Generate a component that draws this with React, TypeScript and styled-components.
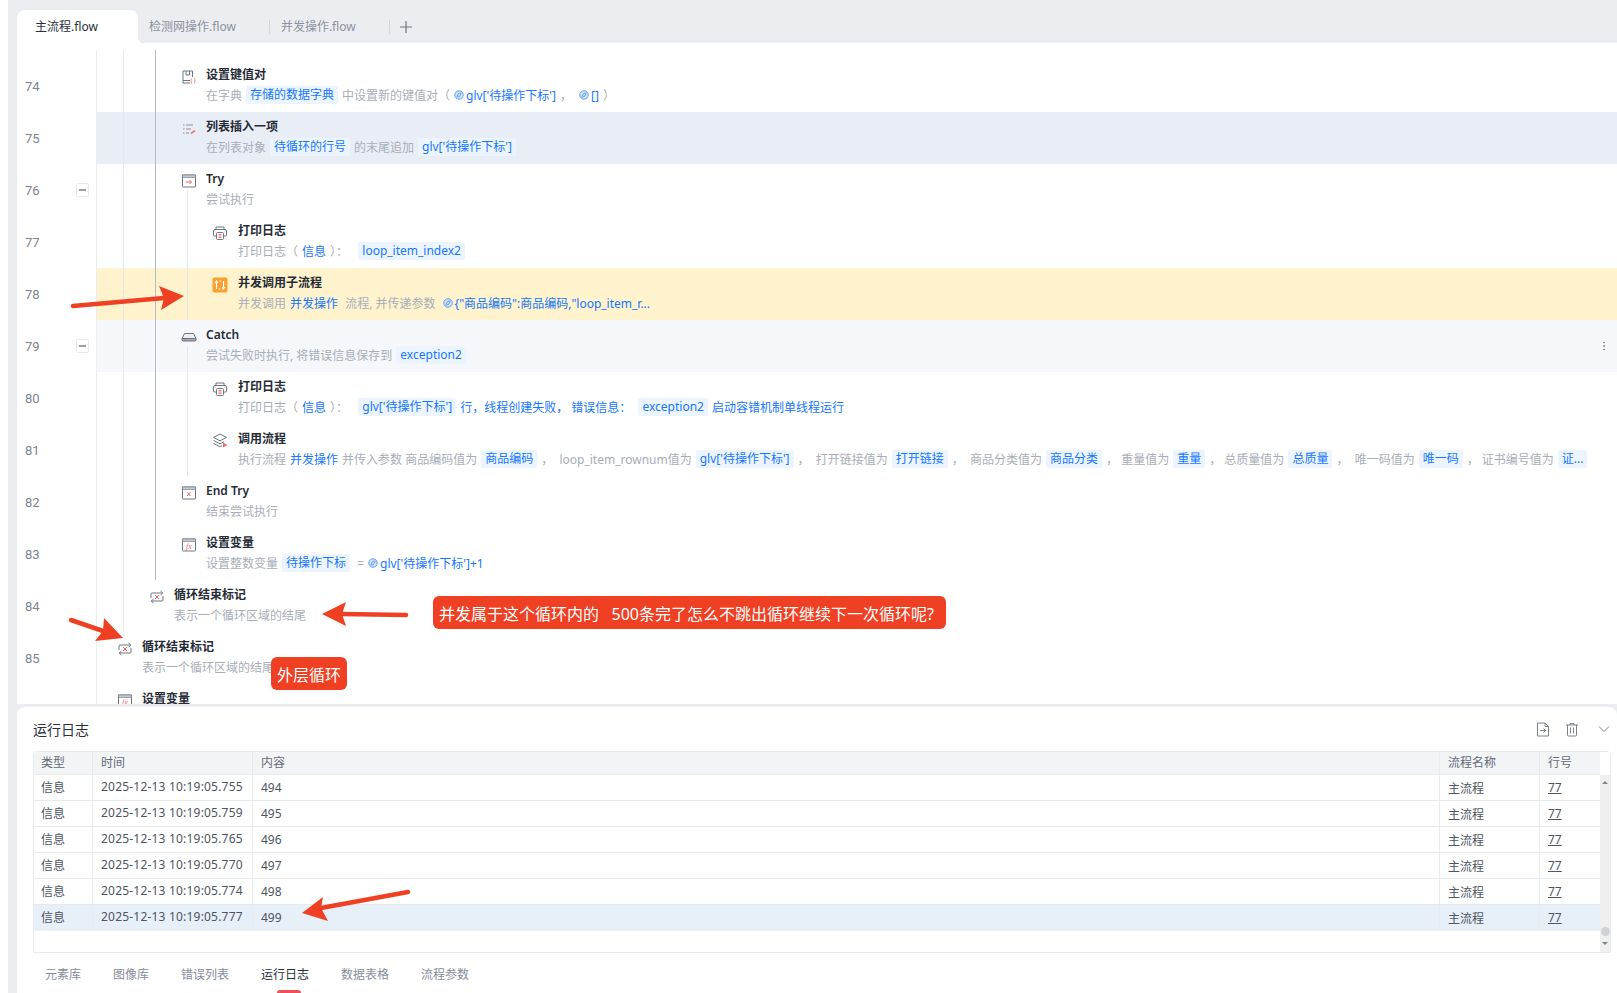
import React from "react";
import styled, { createGlobalStyle } from "styled-components";
import { MoreVertical } from "lucide-react";

const GlobalStyle = createGlobalStyle`
    html, body {
        margin: 0;
        padding: 0;
        overflow: hidden;
        background: #fff;
        font-family: "Noto Sans", "Noto Sans CJK SC", sans-serif;
    }
    * {
        box-sizing: border-box;
    }
`;

const Page = styled.div`
    position: relative;
    width: 1617px;
    height: 993px;
    overflow: hidden;
    display: flex;
    background: #fff;
`;

const Main = styled.div`
    margin-left: 8px;
    padding-left: 9px;
    flex: 1;
    min-width: 0;
    display: flex;
    flex-direction: column;
    background: #ebedf1;
`;

const TabBar = styled.div`
    height: 43px;
    padding-top: 10px;
    display: flex;
    align-items: stretch;
    flex: none;
`;

const FileTab = styled.div<{ $active?: boolean }>`
    position: relative;
    display: flex;
    align-items: center;
    font-size: 12px;
    padding-bottom: 2px;
    color: ${(p) => (p.$active ? "#2b303b" : "#8b919d")};
    background: ${(p) => (p.$active ? "#fff" : "transparent")};
    width: ${(p) => (p.$active ? "121px" : "auto")};
    padding-left: ${(p) => (p.$active ? "18px" : "11px")};
    padding-right: ${(p) => (p.$active ? "0" : "33px")};
    border-radius: ${(p) => (p.$active ? "8px 8px 0 0" : "0")};
    &::after {
        content: "";
        display: ${(p) => (p.$active ? "block" : "none")};
        position: absolute;
        right: -6px;
        bottom: 0;
        width: 6px;
        height: 6px;
        background: radial-gradient(circle at 100% 0, transparent 6px, #fff 6.5px);
    }
`;

const TabSep = styled.div`
    width: 1px;
    height: 14px;
    background: #d3d6dc;
    align-self: center;
`;

const PlusBtn = styled.div`
    align-self: center;
    margin: 0 0 0 10px;
    color: #6f7683;
    display: flex;
`;

const Editor = styled.div`
    height: 661px;
    flex: none;
    overflow: hidden;
    background: #fff;
    padding-top: 7px;
`;

const Row = styled.div<{ $stub?: boolean }>`
    display: flex;
    height: ${(p) => (p.$stub ? "10px" : "52px")};
`;

const Gutter = styled.div`
    width: 80px;
    flex: none;
    padding: 0 7px 0 8px;
    display: flex;
    align-items: center;
    justify-content: space-between;
    border-right: 1px solid #ebedf1;
    color: #7d8492;
    font-family: Roboto, sans-serif;
    font-size: 13px;
`;

const Collapse = styled.div`
    width: 13px;
    height: 14px;
    border: 1px solid #e8eaee;
    border-radius: 2px;
    display: flex;
    align-items: center;
    justify-content: center;
    &::before {
        content: "";
        width: 7px;
        height: 1.5px;
        background: #9aa0ab;
    }
`;

const Body = styled.div<{ $tone?: string }>`
    flex: 1;
    min-width: 0;
    display: flex;
    background: ${(p) =>
        p.$tone === "active" ? "#e9eef6" : p.$tone === "run" ? "#fef3cd" : p.$tone === "hover" ? "#f5f7fa" : "#fff"};
`;

const Guide = styled.div<{ $first?: boolean; $dark?: boolean }>`
    flex: none;
    width: ${(p) => (p.$first ? "27px" : "32px")};
    border-right: 1px solid ${(p) => (p.$dark ? "#b4bac6" : "#e4e7ec")};
`;

const IconSlot = styled.div<{ $flat?: boolean; $deep?: boolean }>`
    flex: none;
    width: ${(p) => (p.$deep ? "26px" : "25px")};
    margin-left: ${(p) => (p.$flat ? "20px" : p.$deep ? "24px" : "25px")};
    padding-top: 9px;
    display: flex;
    flex-direction: column;
    svg {
        display: block;
        flex: none;
    }
`;

const Tail = styled.div`
    flex: 1;
    width: 1px;
    margin: 1px 0 0 6px;
    background: #e4e7ec;
`;

const Content = styled.div`
    flex: 1;
    min-width: 0;
    padding-top: 5px;
`;

const Title = styled.div`
    height: 20px;
    line-height: 20px;
    font-size: 12px;
    font-weight: 600;
    color: #262b36;
`;

const Desc = styled.div`
    height: 20px;
    display: flex;
    align-items: center;
    gap: 4px;
    font-size: 12px;
    color: #a8aeb9;
    white-space: pre;
`;

const Blue = styled.span`
    color: #1677ff;
`;

const Tag = styled.span`
    height: 18px;
    line-height: 18px;
    padding: 0 4px;
    border-radius: 2px;
    background: #ecf5ff;
    color: #1677ff;
`;

const PyRef = styled.span`
    display: inline-flex;
    align-items: center;
    gap: 2px;
    color: #1677ff;
`;

const Kebab = styled.div`
    flex: none;
    width: 12px;
    margin-right: 7px;
    display: flex;
    align-items: center;
    color: #7d8492;
`;

const LogPanel = styled.div`
    margin-top: 3px;
    flex: 1;
    min-height: 0;
    display: flex;
    flex-direction: column;
    background: #fff;
    border-radius: 8px 8px 0 0;
    padding: 0 6px 0 16px;
`;

const LogHeader = styled.div`
    height: 44px;
    flex: none;
    display: flex;
    align-items: center;
    justify-content: space-between;
`;

const LogTitle = styled.div`
    font-size: 14px;
    color: #2b303b;
`;

const Tools = styled.div`
    display: flex;
    align-items: center;
    gap: 15px;
    padding-right: 1px;
    color: #7b8290;
    svg {
        display: block;
    }
    svg:last-child {
        margin-left: 4px;
    }
`;

const TableBox = styled.div`
    height: 202px;
    flex: none;
    display: flex;
    border: 1px solid #e8eaee;
    border-radius: 4px 4px 0 0;
`;

const TableMain = styled.div`
    flex: 1;
    min-width: 0;
`;

const LogRow = styled.div<{ $head?: boolean; $sel?: boolean }>`
    display: grid;
    grid-template-columns: 59px 160px 1187px 100px 61px;
    height: ${(p) => (p.$head ? "23px" : "26px")};
    font-size: 12px;
    color: ${(p) => (p.$head ? "#646b78" : "#4e5562")};
    background: ${(p) => (p.$head ? "#f3f4f6" : p.$sel ? "#e7eff9" : "#fff")};
    border-bottom: 1px solid ${(p) => (p.$sel ? "#e7eff9" : "#e8eaee")};
`;

const LogCell = styled.div<{ $raised?: boolean }>`
    display: flex;
    align-items: center;
    padding-left: 8px;
    padding-bottom: ${(p) => (p.$raised ? "2px" : "0")};
    border-right: 1px solid #e8eaee;
    white-space: pre;
    &:first-child {
        padding-left: 7px;
    }
    &:last-child {
        border-right: none;
    }
`;

const TimeText = styled.span`
    letter-spacing: 0.2px;
`;

const LineLink = styled.span`
    text-decoration: underline;
`;

const ScrollTrack = styled.div`
    width: 10px;
    flex: none;
    display: flex;
    flex-direction: column;
    align-items: center;
    padding-bottom: 7px;
    background: #efefef;
`;

const ScrollCorner = styled.div`
    height: 23px;
    width: 100%;
    background: #fff;
    flex: none;
`;

const ScrollArrow = styled.div<{ $down?: boolean }>`
    width: 0;
    height: 0;
    border-left: 3px solid transparent;
    border-right: 3px solid transparent;
    ${(p) => (p.$down ? "border-top: 3px solid #80848c;" : "border-bottom: 3px solid #80848c;")}
    margin-top: 6px;
`;

const ScrollThumb = styled.div`
    width: 9px;
    height: 9px;
    border-radius: 50%;
    background: #cfd2d6;
    margin-top: auto;
`;

const BottomTabs = styled.div`
    flex: 1;
    display: flex;
    align-items: center;
    gap: 32px;
    padding: 0 0 0 12px;
`;

const BottomTab = styled.div<{ $active?: boolean }>`
    position: relative;
    height: 40px;
    padding-top: 1px;
    display: flex;
    align-items: center;
    font-size: 12px;
    color: ${(p) => (p.$active ? "#2b303b" : "#868d9b")};
    &::after {
        content: "";
        display: ${(p) => (p.$active ? "block" : "none")};
        position: absolute;
        left: 16px;
        bottom: 0;
        width: 24px;
        height: 3px;
        border-radius: 4px 4px 0 0;
        background: #ef4f56;
    }
`;

const Bubble = styled.div<{ $left: number; $top: number }>`
    position: absolute;
    left: ${(p) => p.$left}px;
    top: ${(p) => p.$top}px;
    height: 33px;
    padding: 0 6px;
    display: flex;
    align-items: center;
    border-radius: 6px;
    background: #ef4023;
    color: #fff;
    font-size: 16px;
    white-space: pre;
`;

const WideBubble = styled(Bubble)`
    padding-right: 12px;
`;

const ArrowLayer = styled.svg`
    position: absolute;
    left: 0;
    top: 0;
    pointer-events: none;
`;

const GRAY = "#6f7683";
const RED = "#f47a7a";

const WindowBox = ({ children }: { children?: React.ReactNode }) => (
    <>
        <rect x="1.5" y="2" width="13" height="12" rx="0.5" fill="none" stroke={GRAY} />
        <rect x="1.5" y="2" width="13" height="2.4" fill="#c5c9d0" stroke={GRAY} strokeWidth="0.6" />
        {children}
    </>
);

const RowIcon = ({ kind }: { kind: string }) => {
    if (kind === "run") {
        return (
            <svg width="16" height="16" viewBox="0 0 16 16">
                <rect x="0.5" y="0.5" width="15" height="15" rx="2" fill="#fb9f2f" />
                <path
                    d="M4.5 12V4.5M3 6l1.5-2L6 6M11.5 4v7.5M10 10l1.5 2 1.5-2M7.5 4h2M6.5 12h2"
                    fill="none"
                    stroke="#fff"
                    strokeWidth="1.2"
                />
            </svg>
        );
    }
    return (
        <svg width="16" height="16" viewBox="0 0 16 16" fill="none">
            {kind === "kv" && (
                <>
                    <path d="M11.5 8V2H2v12h7M2 11.5h7M5 2v4h3.5V2" stroke={GRAY} />
                    <path
                        d="M11 9.5c-1 0-.6 2-1.2 2.5.6.5.2 2.5 1.2 2.5M13 9.5c1 0 .6 2 1.2 2.5-.6.5-.2 2.5-1.2 2.5"
                        stroke={RED}
                    />
                </>
            )}
            {kind === "list" && (
                <>
                    <path d="M2 4h1.5M5 4h7M2 8h1.5M5 8h5M2 12h1.5M5 12h3" stroke="#8b919d" />
                    <path d="M10 12.5l4-3" stroke={RED} strokeWidth="1.6" />
                </>
            )}
            {kind === "try" && (
                <WindowBox>
                    <path d="M4.5 9h5.5M8.5 7l2 2-2 2" stroke="#f4686c" />
                </WindowBox>
            )}
            {kind === "print" && (
                <>
                    <path
                        d="M4 4V2h8v2M4 11H2.5A1 1 0 0 1 1.5 10V6a1.5 1.5 0 0 1 1.5-1.5h10A1.5 1.5 0 0 1 14.5 6v4a1 1 0 0 1-1 1H12"
                        stroke={GRAY}
                    />
                    <rect x="4.5" y="7.5" width="7" height="7" rx="1" fill="#fff" stroke={GRAY} />
                    <path d="M6.5 9.5h3M6.5 11h3M6.5 12.5h3" stroke="#f4686c" strokeWidth="0.9" />
                </>
            )}
            {kind === "catch" && (
                <>
                    <path d="M3.5 4.5h9L15 9.5H1z" fill="#eceef2" stroke={GRAY} />
                    <path d="M1 9.5h14v1.5a1 1 0 0 1-1 1H2a1 1 0 0 1-1-1z" fill="#a4a9b3" stroke={GRAY} />
                    <circle cx="3.5" cy="10.8" r="0.8" fill="#f4686c" />
                </>
            )}
            {kind === "flow" && (
                <>
                    <path d="M8 1l6.5 3.4L8 7.8 1.5 4.4z" stroke={GRAY} />
                    <path d="M1.5 7.4L8 10.8l4-2.1M1.5 10.4L8 13.8l2-1" stroke={GRAY} />
                    <path d="M11 9.5l4.5 2.5-4.5 2.5z" fill="#f4686c" />
                </>
            )}
            {kind === "endtry" && (
                <WindowBox>
                    <path d="M6 7.2l3.5 3.8M9.5 7.2L6 11" stroke="#f4686c" />
                </WindowBox>
            )}
            {kind === "fx" && (
                <WindowBox>
                    <text
                        x="8"
                        y="11.8"
                        textAnchor="middle"
                        fontSize="8"
                        fontStyle="italic"
                        fontFamily="Liberation Serif, serif"
                        fill="#f4686c"
                    >
                        fx
                    </text>
                </WindowBox>
            )}
            {kind === "loop" && (
                <>
                    <path d="M2 9V5A1 1 0 0 1 3 4h10M14 7v4a1 1 0 0 1-1 1H3" stroke={GRAY} />
                    <path d="M11.5 2l2.4 2-2.4 2M4.5 10L2.1 12l2.4 2" stroke={GRAY} />
                    <path d="M6 6l4 4M10 6l-4 4" stroke="#f4545a" />
                </>
            )}
        </svg>
    );
};

const PyMark = () => (
    <svg width="10" height="10" viewBox="0 0 10 10" fill="none">
        <circle cx="5" cy="5" r="4.2" fill="#d6e6fb" stroke="#5f9fef" strokeWidth="1" />
        <path d="M2.6 6.2C4.2 6 3.6 3.4 5.2 3.2h2M7.4 3.8C5.8 4 6.4 6.6 4.8 6.8h-2" stroke="#4a90ee" strokeWidth="0.9" />
    </svg>
);

const FileArrowIcon = () => (
    <svg width="14" height="15" viewBox="0 0 14 15" fill="none" stroke="#7b8290" strokeWidth="1">
        <path d="M1.5 1h7.5l3.5 3.5V14h-11zM9 1v3.5h3.5" />
        <path d="M4 8.5h5.5M7.5 6.5l2 2-2 2" />
    </svg>
);

const TrashIcon = () => (
    <svg width="14" height="15" viewBox="0 0 14 15" fill="none" stroke="#7b8290" strokeWidth="1">
        <path d="M1 3h12M5 3V1.5h4V3M2.5 3v10a1 1 0 0 0 1 1h7a1 1 0 0 0 1-1V3M5.5 5.5v6M8.5 5.5v6" />
    </svg>
);

const ChevronIcon = () => (
    <svg width="12" height="8" viewBox="0 0 12 8" fill="none" stroke="#7b8290" strokeWidth="1">
        <path d="M1 1.5l5 5 5-5" />
    </svg>
);

const PlusIcon = () => (
    <svg width="12" height="12" viewBox="0 0 12 12" fill="none" stroke="currentColor" strokeWidth="1.2">
        <path d="M6 0v12M0 6h12" />
    </svg>
);

type Pt = [number, number];

const Arrow = ({ tail, tip, c1, c2, notch }: { tail: Pt; tip: Pt; c1: Pt; c2: Pt; notch: Pt }) => (
    <>
        <path
            d={`M${tail[0]} ${tail[1]}L${notch[0]} ${notch[1]}`}
            stroke="#ef4023"
            strokeWidth="4.5"
            strokeLinecap="round"
        />
        <polygon points={[tip, c1, notch, c2].map((p) => p.join(",")).join(" ")} fill="#ef4023" />
    </>
);

type Seg = { t?: string; b?: string; g?: string; p?: string };

type FlowLine = {
    no?: number;
    depth: number;
    icon: string;
    title: string;
    desc: Seg[];
    tone?: string;
    fold?: boolean;
    tail?: boolean;
    more?: boolean;
};

const lines: FlowLine[] = [
    {
        no: 74,
        depth: 2,
        icon: "kv",
        title: "设置键值对",
        desc: [
            { t: "在字典" },
            { g: "存储的数据字典" },
            { t: "中设置新的键值对（" },
            { p: "glv['待操作下标']" },
            { t: "， " },
            { p: "[]" },
            { t: "）" }
        ]
    },
    {
        no: 75,
        depth: 2,
        icon: "list",
        title: "列表插入一项",
        tone: "active",
        desc: [{ t: "在列表对象" }, { g: "待循环的行号" }, { t: "的末尾追加" }, { g: "glv['待操作下标']" }]
    },
    { no: 76, depth: 2, icon: "try", title: "Try", fold: true, tail: true, desc: [{ t: "尝试执行" }] },
    {
        no: 77,
        depth: 3,
        icon: "print",
        title: "打印日志",
        desc: [{ t: "打印日志（" }, { b: "信息" }, { t: "）：  " }, { g: "loop_item_index2" }]
    },
    {
        no: 78,
        depth: 3,
        icon: "run",
        title: "并发调用子流程",
        tone: "run",
        desc: [
            { t: "并发调用" },
            { b: "并发操作" },
            { t: " 流程, 并传递参数 " },
            { p: "{\"商品编码\":商品编码,\"loop_item_r..." }
        ]
    },
    {
        no: 79,
        depth: 2,
        icon: "catch",
        title: "Catch",
        tone: "hover",
        fold: true,
        tail: true,
        more: true,
        desc: [{ t: "尝试失败时执行, 将错误信息保存到" }, { g: "exception2" }]
    },
    {
        no: 80,
        depth: 3,
        icon: "print",
        title: "打印日志",
        desc: [
            { t: "打印日志（" },
            { b: "信息" },
            { t: "）：  " },
            { g: "glv['待操作下标']" },
            { b: "行，线程创建失败， 错误信息： " },
            { g: "exception2" },
            { b: "启动容错机制单线程运行" }
        ]
    },
    {
        no: 81,
        depth: 3,
        icon: "flow",
        title: "调用流程",
        desc: [
            { t: "执行流程" },
            { b: "并发操作" },
            { t: "并传入参数 商品编码值为" },
            { g: "商品编码" },
            { t: "，  loop_item_rownum值为" },
            { g: "glv['待操作下标']" },
            { t: "，  打开链接值为" },
            { g: "打开链接" },
            { t: "，  商品分类值为" },
            { g: "商品分类" },
            { t: "， 重量值为" },
            { g: "重量" },
            { t: "， 总质量值为" },
            { g: "总质量" },
            { t: "，  唯一码值为" },
            { g: "唯一码" },
            { t: "， 证书编号值为" },
            { g: "证..." }
        ]
    },
    { no: 82, depth: 2, icon: "endtry", title: "End Try", desc: [{ t: "结束尝试执行" }] },
    {
        no: 83,
        depth: 2,
        icon: "fx",
        title: "设置变量",
        desc: [{ t: "设置整数变量" }, { g: "待操作下标" }, { t: " =" }, { p: "glv['待操作下标']+1" }]
    },
    { no: 84, depth: 1, icon: "loop", title: "循环结束标记", desc: [{ t: "表示一个循环区域的结尾" }] },
    { no: 85, depth: 0, icon: "loop", title: "循环结束标记", desc: [{ t: "表示一个循环区域的结尾" }] },
    { depth: 0, icon: "fx", title: "设置变量", desc: [] }
];

const Guides = ({ depth }: { depth: number }) => (
    <>
        {depth > 0 && <Guide $first />}
        {depth > 1 && <Guide $dark />}
        {depth > 2 && <Guide />}
    </>
);

const logs = [
    ["2025-12-13 10:19:05.755", "494"],
    ["2025-12-13 10:19:05.759", "495"],
    ["2025-12-13 10:19:05.765", "496"],
    ["2025-12-13 10:19:05.770", "497"],
    ["2025-12-13 10:19:05.774", "498"],
    ["2025-12-13 10:19:05.777", "499"]
];

const bottomTabs = ["元素库", "图像库", "错误列表", "运行日志", "数据表格", "流程参数"];

export default function App() {
    return (
        <Page>
            <GlobalStyle />
            <Main>
                <TabBar>
                    <FileTab $active>主流程.flow</FileTab>
                    <FileTab>检测网操作.flow</FileTab>
                    <TabSep />
                    <FileTab>并发操作.flow</FileTab>
                    <TabSep />
                    <PlusBtn>
                        <PlusIcon />
                    </PlusBtn>
                </TabBar>
                <Editor>
                    <Row $stub>
                        <Gutter />
                        <Body>
                            <Guides depth={2} />
                        </Body>
                    </Row>
                    {lines.map((line, idx) => (
                        <Row key={idx}>
                            <Gutter>
                                {line.no}
                                {line.fold && <Collapse />}
                            </Gutter>
                            <Body $tone={line.tone}>
                                <Guides depth={line.depth} />
                                <IconSlot $flat={line.depth === 0} $deep={line.depth === 3}>
                                    <RowIcon kind={line.icon} />
                                    {line.tail && <Tail />}
                                </IconSlot>
                                <Content>
                                    <Title>{line.title}</Title>
                                    <Desc>
                                        {line.desc.map((seg, i) => {
                                            if (seg.g) return <Tag key={i}>{seg.g}</Tag>;
                                            if (seg.b) return <Blue key={i}>{seg.b}</Blue>;
                                            if (seg.p)
                                                return (
                                                    <PyRef key={i}>
                                                        <PyMark />
                                                        {seg.p}
                                                    </PyRef>
                                                );
                                            return <span key={i}>{seg.t}</span>;
                                        })}
                                    </Desc>
                                </Content>
                                {line.more && (
                                    <Kebab>
                                        <MoreVertical size={12} />
                                    </Kebab>
                                )}
                            </Body>
                        </Row>
                    ))}
                </Editor>
                <LogPanel>
                    <LogHeader>
                        <LogTitle>运行日志</LogTitle>
                        <Tools>
                            <FileArrowIcon />
                            <TrashIcon />
                            <ChevronIcon />
                        </Tools>
                    </LogHeader>
                    <TableBox>
                        <TableMain>
                            <LogRow $head>
                                <LogCell $raised>类型</LogCell>
                                <LogCell $raised>时间</LogCell>
                                <LogCell $raised>内容</LogCell>
                                <LogCell $raised>流程名称</LogCell>
                                <LogCell $raised>行号</LogCell>
                            </LogRow>
                            {logs.map(([time, text], i) => (
                                <LogRow key={text} $sel={i === logs.length - 1}>
                                    <LogCell $raised>信息</LogCell>
                                    <LogCell $raised>
                                        <TimeText>{time}</TimeText>
                                    </LogCell>
                                    <LogCell>{text}</LogCell>
                                    <LogCell>主流程</LogCell>
                                    <LogCell>
                                        <LineLink>77</LineLink>
                                    </LogCell>
                                </LogRow>
                            ))}
                        </TableMain>
                        <ScrollTrack>
                            <ScrollCorner />
                            <ScrollArrow />
                            <ScrollThumb />
                            <ScrollArrow $down />
                        </ScrollTrack>
                    </TableBox>
                    <BottomTabs>
                        {bottomTabs.map((name) => (
                            <BottomTab key={name} $active={name === "运行日志"}>
                                {name}
                            </BottomTab>
                        ))}
                    </BottomTabs>
                </LogPanel>
            </Main>
            <ArrowLayer width="1617" height="993" viewBox="0 0 1617 993">
                <Arrow tail={[73, 306]} tip={[184, 296]} c1={[159, 286]} c2={[161, 310]} notch={[164, 298]} />
                <Arrow tail={[406, 615]} tip={[322, 614]} c1={[346, 602]} c2={[346, 626]} notch={[342, 614]} />
                <Arrow tail={[71, 620]} tip={[123, 638]} c1={[104, 618]} c2={[95, 641]} notch={[103, 631]} />
                <Arrow tail={[408, 892]} tip={[302, 913]} c1={[323, 897]} c2={[328, 921]} notch={[321, 908]} />
            </ArrowLayer>
            <WideBubble $left={433} $top={596}>
                并发属于这个循环内的   500条完了怎么不跳出循环继续下一次循环呢?
            </WideBubble>
            <Bubble $left={271} $top={657}>
                外层循环
            </Bubble>
        </Page>
    );
}
